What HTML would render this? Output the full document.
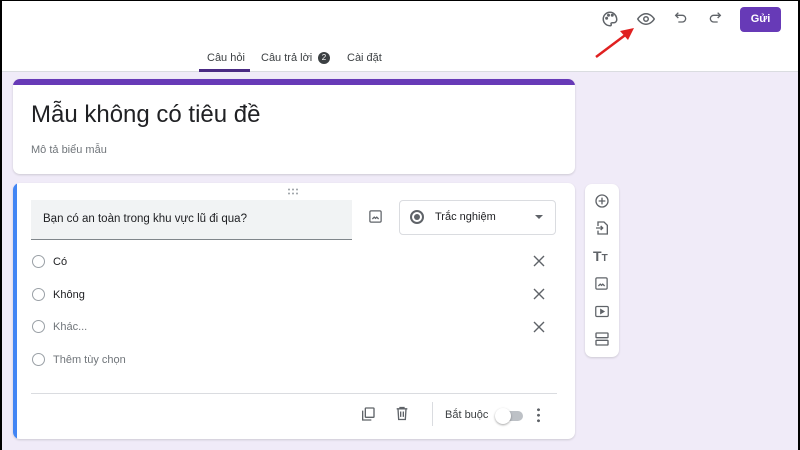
<!DOCTYPE html>
<html><head><meta charset="utf-8"><style>
*{margin:0;padding:0;box-sizing:border-box}
body{width:800px;height:450px;overflow:hidden;background:#f0ebf8;font-family:"Liberation Sans",sans-serif;position:relative;color:#202124}
.hdr{position:absolute;left:0;top:0;width:800px;height:72px;background:#fff;border-bottom:1px solid #dadce0;border-left:2px solid #000;border-right:2px solid #000;border-top:1px solid #000}
.abs{position:absolute}
.tab{position:absolute;top:52px;font-size:11px;color:#3c4043}
.card{position:absolute;background:#fff;border-radius:7px;box-shadow:0 1px 2px rgba(0,0,0,.15)}
.radio{position:absolute;left:32px;width:13px;height:13px;border:1.5px solid #9aa0a6;border-radius:50%}
.opt{position:absolute;left:53px;font-size:11px}
svg{position:absolute}
</style></head><body>
<div class="hdr"></div>
<svg style="left:601px;top:10px" width="18" height="18" viewBox="0 0 24 24" fill="none" stroke="#5f6368" stroke-width="2"><path d="M12 3a9 9 0 0 0 0 18c1.5 0 2-1 1.5-2s0-2 1.5-2h2a4 4 0 0 0 4-4c0-5.5-4-10-9-10z"/><circle cx="7.5" cy="11" r="1" fill="#5f6368"/><circle cx="10" cy="7" r="1" fill="#5f6368"/><circle cx="15" cy="7" r="1" fill="#5f6368"/></svg>
<svg style="left:636px;top:10px" width="20" height="18" viewBox="0 0 24 24" fill="none" stroke="#5f6368" stroke-width="2"><path d="M1 12s4-7 11-7 11 7 11 7-4 7-11 7S1 12 1 12z"/><circle cx="12" cy="12" r="3"/></svg>
<svg style="left:673px;top:10px" width="16" height="16" viewBox="0 0 24 24" fill="none" stroke="#5f6368" stroke-width="2"><path d="M8 4L4 8l4 4"/><path d="M4 8h10a5 5 0 0 1 0 10H8"/></svg>
<svg style="left:707px;top:10px" width="16" height="16" viewBox="0 0 24 24" fill="none" stroke="#5f6368" stroke-width="2"><path d="M16 4l4 4-4 4"/><path d="M20 8H10a5 5 0 0 0 0 10h6"/></svg>
<div class="abs" style="left:740px;top:7px;width:41px;height:25px;background:#673ab7;border-radius:4px;color:#fff;font-size:11px;font-weight:bold;text-align:center;line-height:25px">Gửi</div>
<svg style="left:592px;top:25px" width="45" height="35" viewBox="0 0 45 35"><path d="M4 32L36 8" stroke="#e02020" stroke-width="2.5"/><path d="M42 3L28 6l8 9z" fill="#e02020"/></svg>
<div class="tab" style="left:207px">Câu hỏi</div>
<div class="abs" style="left:199px;top:69px;width:51px;height:3px;background:#4a2a84"></div>
<div class="tab" style="left:261px">Câu trả lời</div>
<div class="abs" style="left:318px;top:52px;width:12px;height:12px;border-radius:50%;background:#3c4043;color:#fff;font-size:8px;text-align:center;line-height:12px">2</div>
<div class="tab" style="left:347px">Cài đặt</div>
<div class="card" style="left:13px;top:79px;width:562px;height:95px;overflow:hidden">
<div style="height:6px;background:#673ab7"></div>
<div class="abs" style="left:18px;top:22px;font-size:24px">Mẫu không có tiêu đề</div>
<div class="abs" style="left:18px;top:65px;font-size:11px;color:#70757a">Mô tả biểu mẫu</div>
</div>
<div class="card" style="left:13px;top:183px;width:562px;height:256px;overflow:hidden">
<div class="abs" style="left:0;top:0;width:4px;height:256px;background:#4285f4"></div>
</div>
<svg style="left:287px;top:188px" width="12" height="7" viewBox="0 0 12 7" fill="#9aa0a6"><circle cx="2" cy="1.5" r="1"/><circle cx="6" cy="1.5" r="1"/><circle cx="10" cy="1.5" r="1"/><circle cx="2" cy="5.5" r="1"/><circle cx="6" cy="5.5" r="1"/><circle cx="10" cy="5.5" r="1"/></svg>
<div class="abs" style="left:31px;top:200px;width:321px;height:40px;background:#f1f3f4;border-bottom:1px solid #80868b"></div>
<div class="abs" style="left:43px;top:213px;font-size:11.5px">Bạn có an toàn trong khu vực lũ đi qua?</div>
<svg style="left:368px;top:209px" width="15" height="15" viewBox="0 0 24 24" fill="none" stroke="#5f6368" stroke-width="2"><rect x="3" y="3" width="18" height="18" rx="2"/><path d="M7 16l3-3 2 2 2-2 3 3" /></svg>
<div class="abs" style="left:399px;top:200px;width:157px;height:35px;border:1px solid #dadce0;border-radius:4px"></div>
<div class="abs" style="left:410px;top:210px;width:14px;height:14px;border:2px solid #5f6368;border-radius:50%"><div style="margin:2px;width:6px;height:6px;border-radius:50%;background:#5f6368"></div></div>
<div class="abs" style="left:435px;top:211px;font-size:11px">Trắc nghiệm</div>
<div class="abs" style="left:535px;top:215px;width:0;height:0;border-left:4px solid transparent;border-right:4px solid transparent;border-top:4px solid #5f6368"></div>
<div class="radio" style="top:255px"></div><div class="opt" style="top:256px">Có</div>
<div class="radio" style="top:288px"></div><div class="opt" style="top:289px">Không</div>
<div class="radio" style="top:320px"></div><div class="opt" style="top:321px;color:#70757a">Khác...</div>
<div class="radio" style="top:353px"></div><div class="opt" style="top:354px;color:#70757a">Thêm tùy chọn</div>
<svg style="left:533px;top:255px" width="12" height="12" viewBox="0 0 12 12" stroke="#5f6368" stroke-width="1.4"><path d="M1 1l10 10M11 1L1 11"/></svg>
<svg style="left:533px;top:288px" width="12" height="12" viewBox="0 0 12 12" stroke="#5f6368" stroke-width="1.4"><path d="M1 1l10 10M11 1L1 11"/></svg>
<svg style="left:533px;top:321px" width="12" height="12" viewBox="0 0 12 12" stroke="#5f6368" stroke-width="1.4"><path d="M1 1l10 10M11 1L1 11"/></svg>
<div class="abs" style="left:31px;top:393px;width:526px;height:1px;background:#dadce0"></div>
<svg style="left:360px;top:406px" width="16" height="16" viewBox="0 0 24 24" fill="none" stroke="#5f6368" stroke-width="2"><rect x="8" y="3" width="13" height="14" rx="1"/><path d="M4 7v14h13"/></svg>
<svg style="left:394px;top:405px" width="16" height="17" viewBox="0 0 24 24" fill="none" stroke="#5f6368" stroke-width="2"><path d="M4 5h16M9 5V3h6v2M6 5l1 16h10l1-16M10 9v8M14 9v8"/></svg>
<div class="abs" style="left:432px;top:402px;width:1px;height:24px;background:#dadce0"></div>
<div class="abs" style="left:445px;top:409px;font-size:11px;color:#3c4043">Bắt buộc</div>
<div class="abs" style="left:500px;top:411px;width:23px;height:10px;border-radius:5px;background:#bdc1c6"></div>
<div class="abs" style="left:495px;top:408px;width:16px;height:16px;border-radius:50%;background:#fff;box-shadow:0 1px 2px rgba(0,0,0,.35)"></div>
<div class="abs" style="left:537px;top:407px;width:3px;height:16px;background:radial-gradient(circle,#5f6368 1.3px,transparent 1.6px) 0 0/3px 5.5px"></div>
<div class="card" style="left:585px;top:184px;width:34px;height:173px"></div>
<svg style="left:594px;top:193px" width="16" height="16" viewBox="0 0 24 24" fill="none" stroke="#5f6368" stroke-width="2"><circle cx="12" cy="12" r="9"/><path d="M12 7v10M7 12h10"/></svg>
<svg style="left:594px;top:220px" width="16" height="16" viewBox="0 0 24 24" fill="none" stroke="#5f6368" stroke-width="2"><path d="M6 9V3h9l5 5v13H6v-5M3 12h10M10 9l3 3-3 3"/></svg>
<div class="abs" style="left:593px;top:248px;font-size:14px;font-weight:bold;color:#5f6368">T<span style="font-size:10px">T</span></div>
<svg style="left:594px;top:276px" width="15" height="15" viewBox="0 0 24 24" fill="none" stroke="#5f6368" stroke-width="2"><rect x="3" y="3" width="18" height="18" rx="2"/><path d="M7 16l3-3 2 2 2-2 3 3"/></svg>
<svg style="left:594px;top:304px" width="16" height="15" viewBox="0 0 24 24" fill="none" stroke="#5f6368" stroke-width="2"><rect x="2" y="4" width="20" height="16" rx="2"/><path d="M10 9v6l5-3z" fill="#5f6368"/></svg>
<svg style="left:594px;top:331px" width="16" height="16" viewBox="0 0 24 24" fill="none" stroke="#5f6368" stroke-width="2"><rect x="3" y="3" width="18" height="7" rx="1"/><rect x="3" y="14" width="18" height="7" rx="1"/></svg>
<div class="abs" style="left:0;top:0;width:2px;height:450px;background:#000"></div>
<div class="abs" style="left:798px;top:0;width:2px;height:450px;background:#000"></div>
</body></html>
